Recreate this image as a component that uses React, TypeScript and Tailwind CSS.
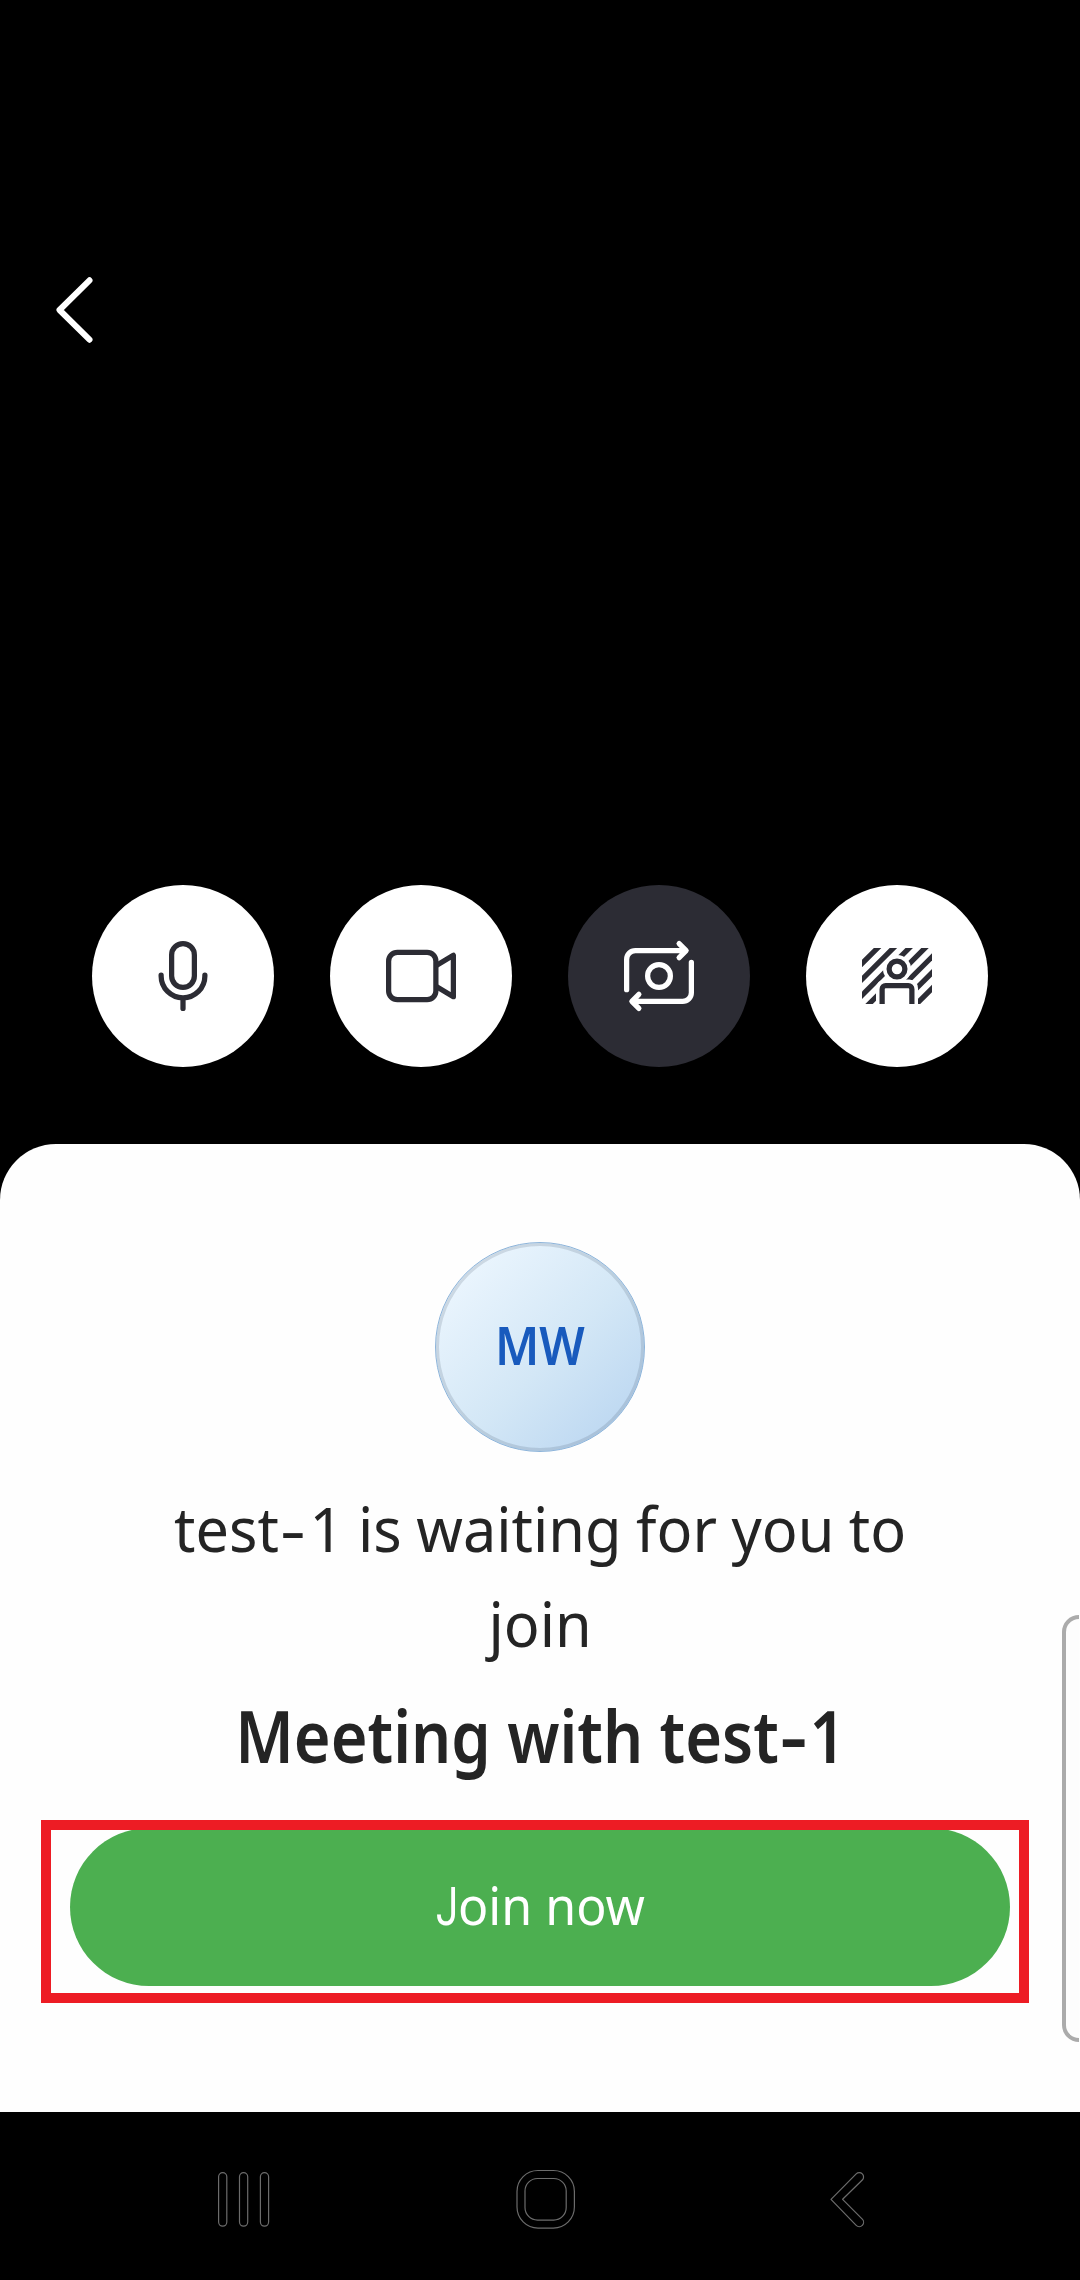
import type { ReactNode } from "react";

function Icon({ children }: { children: ReactNode }) {
  return (
    <svg
      viewBox="0 0 24 24"
      className="size-[84px]"
      fill="none"
      stroke="currentColor"
      strokeWidth={1.5}
      strokeLinecap="round"
      strokeLinejoin="round"
    >
      {children}
    </svg>
  );
}

function MicIcon() {
  return (
    <Icon>
      <rect x="8.75" y="2.75" width="6.5" height="12.5" rx="3.25" />
      <path d="M5.75 11.75V12a6.25 6.25 0 0 0 12.5 0v-.25M12 18.25v3" />
    </Icon>
  );
}

function VideoIcon() {
  return (
    <Icon>
      <rect x="2.75" y="5.25" width="13.5" height="13.5" rx="2.5" />
      <path d="M16.5 8.95l4.75-2.85v11.8L16.5 15.05" />
    </Icon>
  );
}

function SwitchCameraIcon() {
  return (
    <Icon>
      <circle cx="12" cy="12" r="3.25" />
      <path d="M2.75 15.9V7.25a2.5 2.5 0 0 1 2.5-2.5H19.5M17.75 2.75l2 2-2 2" />
      <path d="M21.25 8.1v8.65a2.5 2.5 0 0 1-2.5 2.5H4.5M6.25 21.25l-2-2 2-2" />
    </Icon>
  );
}

function BackgroundIcon() {
  const stripes = [10.45, 14.97, 19.49, 24.01, 28.53, 33.05, 37.57];
  return (
    <Icon>
      <defs>
        <clipPath id="frame">
          <rect x="2" y="4" width="20" height="16" />
        </clipPath>
        <mask id="person" maskUnits="userSpaceOnUse" x="0" y="0" width="24" height="24">
          <rect width="24" height="24" fill="white" stroke="none" />
          <circle cx="12" cy="10" r="4" fill="black" stroke="none" />
          <rect x="6" y="13" width="12" height="12" rx="2.5" fill="black" stroke="none" />
        </mask>
      </defs>
      <g clipPath="url(#frame)">
        <g mask="url(#person)">
          {stripes.map((s) => (
            <path key={s} d={`M0 ${s}L${s} 0`} />
          ))}
        </g>
        <circle cx="12" cy="10" r="2.25" />
        <path d="M7.75 22v-6.25a1 1 0 0 1 1-1h6.5a1 1 0 0 1 1 1V22" />
      </g>
    </Icon>
  );
}

function RoundButton({ label, muted, children }: { label: string; muted?: boolean; children: ReactNode }) {
  return (
    <button
      aria-label={label}
      className={
        muted
          ? "flex size-[182px] items-center justify-center rounded-full bg-[#2c2c34] text-white"
          : "flex size-[182px] items-center justify-center rounded-full bg-white text-[#2c2c34]"
      }
    >
      {children}
    </button>
  );
}

/** Hyphen drawn a little wider than the font's own. */
function WideHyphen() {
  return <span className="mr-[7px] ml-[5px] inline-block scale-x-[1.35]">-</span>;
}

export default function App() {
  return (
    <div className="flex h-[2280px] w-[1080px] flex-col overflow-hidden bg-black font-['Noto_Sans',sans-serif]">
      <header className="h-[885px] pt-[268px] pl-[48px]">
        <svg viewBox="0 0 84 84" className="size-[84px]" fill="none" stroke="white" strokeWidth={6} strokeLinecap="round" strokeLinejoin="round">
          <path d="M41.5 12.3L11.5 42l30 29.7" />
        </svg>
      </header>

      <div className="flex h-[259px] shrink-0 items-start justify-center gap-14">
        <RoundButton label="Microphone">
          <MicIcon />
        </RoundButton>
        <RoundButton label="Camera">
          <VideoIcon />
        </RoundButton>
        <RoundButton label="Switch camera" muted>
          <SwitchCameraIcon />
        </RoundButton>
        <RoundButton label="Background">
          <BackgroundIcon />
        </RoundButton>
      </div>

      <main className="relative flex h-[968px] shrink-0 flex-col items-center rounded-t-[56px] bg-[#fefefe] pt-[98px]">
        <div className="flex size-[210px] items-center justify-center rounded-full border border-[#8db4da] bg-linear-135 from-[#ecf6fe] from-10% via-[#d3e7f6] via-55% to-[#bcd7f1] to-90% pb-1.5 shadow-[inset_0_0_0_3px_rgba(70,90,110,0.18)]">
          <span className="inline-block scale-x-[0.9] text-[53px] leading-none font-semibold text-[#185abd]">MW</span>
        </div>

        <p className="mt-[29px] scale-x-[0.958] text-center text-[62px] leading-[95px] whitespace-nowrap text-[#242424] [word-spacing:-1px]">
          test
          <WideHyphen />1 is waiting for you to
          <br />
          join
        </p>
        <h1 className="mt-[10px] scale-x-[0.876] text-[72px] leading-[108px] font-semibold whitespace-nowrap text-[#242424]">
          Meeting with test
          <WideHyphen />1
        </h1>

        <div className="absolute top-[684px] left-[70px] w-[940px]">
          <button className="flex h-[158px] w-full items-center justify-center rounded-full bg-[#4caf50] pb-0.5 text-[53px] leading-none text-white">
            <span className="inline-block scale-x-[0.945]">
              <span className="-ml-1.5 inline-block origin-right scale-x-[0.8] font-['Roboto',sans-serif]">J</span>
              <span>oin now</span>
            </span>
          </button>
          <div className="absolute -top-2 -left-[29px] h-[183px] w-[988px] border-10 border-[#ed1c24]" />
        </div>

        <div className="absolute top-[471px] right-px h-[427px] w-[17px] rounded-l-[18px] border-4 border-r-0 border-[#ababab] bg-[#fdfdfd]" />
      </main>

      <nav className="flex h-[168px] shrink-0 items-start pt-[55px] pl-[215px]">
        <svg viewBox="0 0 60 64" className="h-16 w-[60px]" fill="none" stroke="#6c6c6c" strokeWidth={1.2}>
          <rect x="3.6" y="5.6" width="8.2" height="53.6" rx="4.1" />
          <rect x="24.5" y="5.6" width="8.2" height="53.6" rx="4.1" />
          <rect x="45.4" y="5.6" width="8.2" height="53.6" rx="4.1" />
        </svg>
        <svg viewBox="0 0 64 64" className="ml-[239px] size-16" fill="none" stroke="#6c6c6c" strokeWidth={1.2}>
          <rect x="3" y="3.5" width="57.4" height="57.6" rx="21" />
          <rect x="11" y="11.5" width="41.2" height="41.6" rx="12.5" />
        </svg>
        <svg viewBox="0 0 42 64" className="ml-[246px] h-16 w-[42px]" fill="none" stroke="#6c6c6c" strokeWidth={1.2} strokeLinejoin="round">
          <path d="M7 32.3L32.2 6.9a4.3 4.3 0 0 1 6.1 6.1L18.6 32.3l19.7 19.9a4.3 4.3 0 0 1-6.1 6.1Z" />
        </svg>
      </nav>
    </div>
  );
}
